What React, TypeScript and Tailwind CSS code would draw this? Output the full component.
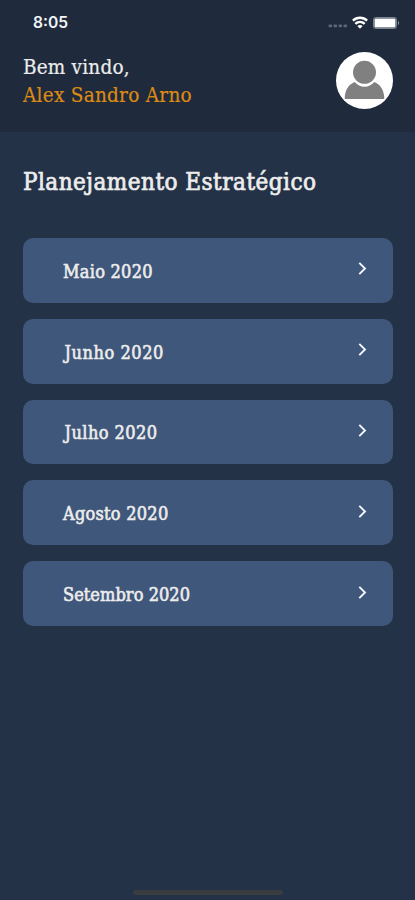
interface MonthItem {
  label: string;
  labelClass: string;
}

const months: MonthItem[] = [
  { label: 'Maio 2020', labelClass: 'tracking-[0.25px]' },
  { label: 'Junho 2020', labelClass: 'pl-[1.5px] tracking-[0.55px]' },
  { label: 'Julho 2020', labelClass: 'pl-[1.5px] tracking-[0.45px]' },
  { label: 'Agosto 2020', labelClass: 'tracking-[0.25px]' },
  { label: 'Setembro 2020', labelClass: 'tracking-[0.06px]' },
];

function StatusBar() {
  return (
    <div className="flex h-[45px] items-center justify-between pl-[33px] pr-[15px] font-['Inter',sans-serif]">
      <span className="pt-[1px] text-[15.6px] leading-5 font-semibold text-[#f1f5f9]">8:05</span>
      <div className="flex items-center">
        {/* No signal */}
        <svg className="mt-[6px]" width="20" height="4" viewBox="0 0 20 4" fill="#5b6776">
          <rect x="0.5" y="0.5" width="3.6" height="2.8" rx="1" />
          <rect x="5.5" y="0.5" width="3.6" height="2.8" rx="1" />
          <rect x="10.5" y="0.5" width="3.6" height="2.8" rx="1" />
          <rect x="15.5" y="0.5" width="3.6" height="2.8" rx="1" />
        </svg>
        {/* Wifi */}
        <svg className="ml-[4px]" width="16" height="13" viewBox="0 0 16 13" fill="none" stroke="#fff" strokeWidth="2.4">
          <path d="M0.9 4.7C4.9 .8 11.1 .8 15.1 4.7" />
          <path d="M3.3 7.8C6.1 5.2 9.9 5.2 12.7 7.8" />
          <path d="M5.4 10C6.9 8.6 9.1 8.6 10.6 10L8 12.8Z" fill="#fff" stroke="none" />
        </svg>
        {/* Battery */}
        <svg className="ml-[5px]" width="27" height="12" viewBox="0 0 27 12">
          <rect x=".5" y=".5" width="23" height="11" rx="2" fill="#1f2b3c" stroke="#7b8490" />
          <rect x="1.5" y="1.5" width="21" height="9" rx="1" fill="#fff" />
          <path d="M25 4C26.5 4.6 26.5 7.4 25 8Z" fill="#8c949e" />
        </svg>
      </div>
    </div>
  );
}

function Avatar() {
  return (
    <svg className="h-[57px] w-[57px]" viewBox="0 0 57 57">
      <circle cx="28.5" cy="28.5" r="28.5" fill="#fff" />
      <path d="M8.8 47V44.5C9.5 37.5 13 32 18.8 30C23.5 36.3 33.5 36.3 38.2 30C44 32 47.5 37.5 48.2 44.5V47Z" fill="#808080" />
      <circle cx="28.5" cy="20.3" r="11.5" fill="#808080" />
    </svg>
  );
}

export default function App() {
  return (
    <main className="flex h-[900px] w-[415px] flex-col overflow-hidden bg-[#243247] font-['Roboto_Slab','DejaVu_Serif',serif] text-[#ececec] [font-stretch:condensed]">
      <header className="h-[132px] bg-[#1f2b3c]">
        <StatusBar />
        <div className="flex justify-between pt-[7px] pr-[22px] pl-[23px]">
          <div className="pt-[1px] text-[20.5px] leading-[28px] whitespace-nowrap [-webkit-text-stroke:0.2px_currentColor]">
            <p className="tracking-[0.2px]">Bem vindo,</p>
            <p className="tracking-[0.27px] text-[#dc8a14]">Alex Sandro Arno</p>
          </div>
          <Avatar />
        </div>
      </header>

      <section className="flex-1 px-[23px] pr-[22px] pt-[34px]">
        <h1 className="pt-[1px] text-[24px] leading-[31px] tracking-[0.47px] whitespace-nowrap [-webkit-text-stroke:0.7px_currentColor]">
          Planejamento Estratégico
        </h1>
        <ul className="mt-[40px] flex flex-col gap-[16px]">
          {months.map(({ label, labelClass }) => (
            <li
              key={label}
              className="flex h-[64.8px] items-center justify-between rounded-[10px] bg-[#3f577a] pr-[26px] pl-[40px]"
            >
              <span
                className={`pt-[3px] text-[18px] leading-6 whitespace-nowrap [-webkit-text-stroke:0.6px_currentColor] ${labelClass}`}
              >
                {label}
              </span>
              <svg className="mb-[3px]" width="9" height="13" viewBox="0 0 9 13" fill="none" stroke="#f4f7fb" strokeWidth="1.9">
                <path d="M1.3 .8L7 6.5L1.3 12.2" />
              </svg>
            </li>
          ))}
        </ul>
      </section>

      {/* Home indicator */}
      <div className="flex h-[10px] justify-center">
        <div className="h-[5px] w-[150px] rounded-full bg-[#3a3d40]" />
      </div>
    </main>
  );
}
